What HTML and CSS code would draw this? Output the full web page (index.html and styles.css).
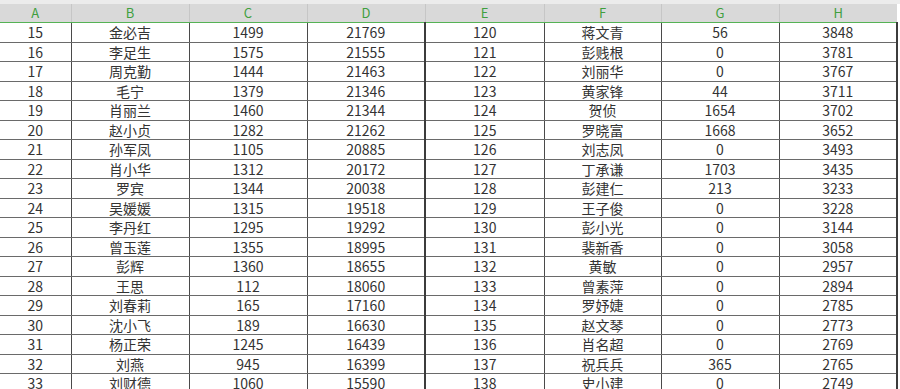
FILE: index.html
```html
<!DOCTYPE html>
<html lang="zh">
<head>
<meta charset="utf-8">
<link rel="stylesheet" href="styles.css">
</head>
<body>
<div class="sheet">
  <div class="topstrip"></div>
  <table class="grid">
    <colgroup>
      <col class="c-a"><col class="c-b"><col class="c-c"><col class="c-d"><col class="c-e"><col class="c-f"><col class="c-g"><col class="c-h">
    </colgroup>
    <thead>
      <tr><th>A</th><th>B</th><th>C</th><th>D</th><th>E</th><th>F</th><th>G</th><th>H</th></tr>
    </thead>
    <tbody id="body"></tbody>
  </table>
</div>
<script src="app.js"></script>
</body>
</html>
```
FILE: app.js
```js
const rows = [
["15","金必吉","1499","21769","120","蒋文青","56","3848"],
["16","李足生","1575","21555","121","彭贱根","0","3781"],
["17","周克勤","1444","21463","122","刘丽华","0","3767"],
["18","毛宁","1379","21346","123","黄家锋","44","3711"],
["19","肖丽兰","1460","21344","124","贺侦","1654","3702"],
["20","赵小贞","1282","21262","125","罗晓富","1668","3652"],
["21","孙军凤","1105","20885","126","刘志凤","0","3493"],
["22","肖小华","1312","20172","127","丁承谦","1703","3435"],
["23","罗宾","1344","20038","128","彭建仁","213","3233"],
["24","吴媛媛","1315","19518","129","王子俊","0","3228"],
["25","李丹红","1295","19292","130","彭小光","0","3144"],
["26","曾玉莲","1355","18995","131","裴新香","0","3058"],
["27","彭辉","1360","18655","132","黄敏","0","2957"],
["28","王思","112","18060","133","曾素萍","0","2894"],
["29","刘春莉","165","17160","134","罗妤婕","0","2785"],
["30","沈小飞","189","16630","135","赵文琴","0","2773"],
["31","杨正荣","1245","16439","136","肖名超","0","2769"],
["32","刘燕","945","16399","137","祝兵兵","365","2765"],
["33","刘财德","1060","15590","138","史小建","0","2749"]
];
const body = document.getElementById("body");
for (const r of rows) {
  const tr = document.createElement("tr");
  r.forEach((v, i) => {
    const td = document.createElement("td");
    td.textContent = v;
    if (i === 3) td.className = "thick";
    if (i === 7) td.className = "edge";
    tr.appendChild(td);
  });
  body.appendChild(tr);
}
```
FILE: styles.css
```css
html, body {
  margin: 0;
  padding: 0;
  background: #ffffff;
  overflow: hidden;
}
.sheet {
  width: 900px;
  height: 389px;
  overflow: hidden;
  background: #ffffff;
}
.topstrip {
  height: 4px;
  background: #ececec;
}
.grid {
  border-collapse: collapse;
  table-layout: fixed;
  width: 897px;
  font-family: "Noto Sans CJK SC", "Noto Sans", sans-serif;
}
.c-a { width: 71px; }
.c-b { width: 118px; }
.c-c { width: 118px; }
.c-d { width: 118px; }
.c-e { width: 119px; }
.c-f { width: 117px; }
.c-g { width: 118px; }
.c-h { width: 118px; }
.grid th {
  height: 18px;
  padding: 0;
  background: #d9d9d9;
  color: #3f9f3f;
  font-weight: normal;
  font-size: 13px;
  line-height: 18px;
  border-left: 1px solid #c6c6c6;
  border-bottom: 1px solid #55b255;
}
.grid th:first-child { border-left: none; }
.grid td {
  height: 18.5px;
  padding: 0;
  text-align: center;
  color: #333333;
  font-size: 14px;
  line-height: 18px;
  border-right: 1px solid #4a4a4a;
  border-bottom: 1px solid #6a6a6a;
  white-space: nowrap;
  overflow: hidden;
}
.grid td.thick { border-right: 2px solid #3c3c3c; }
.grid td.edge { border-right: 2px solid #3c3c3c; }
```
